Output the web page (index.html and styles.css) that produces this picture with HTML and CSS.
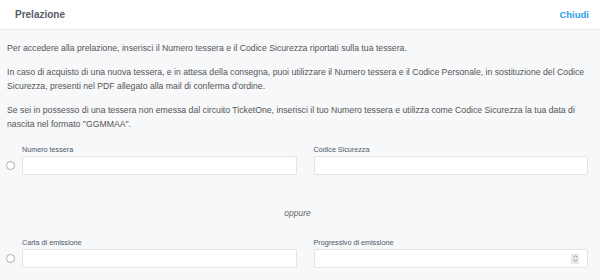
FILE: index.html
```html
<!DOCTYPE html>
<html>
<head>
  <title>Prelazione</title>
  <link rel="stylesheet" href="styles.css">
</head>
<body>
  <div class="modal-header">
    <h1 class="title">Prelazione</h1>
    <a class="close" href="#">Chiudi</a>
  </div>
  <div class="modal-body">
    <p class="generic-text">Per accedere alla prelazione, inserisci il Numero tessera e il Codice Sicurezza riportati sulla tua tessera.</p>
    <p class="generic-text">In caso di acquisto di una nuova tessera, e in attesa della consegna, puoi utilizzare il Numero tessera e il Codice Personale, in sostituzione del Codice Sicurezza, presenti nel PDF allegato alla mail di conferma d'ordine.</p>
    <p class="generic-text">Se sei in possesso di una tessera non emessa dal circuito TicketOne, inserisci il tuo Numero tessera e utilizza come Codice Sicurezza la tua data di nascita nel formato "GGMMAA".</p>

    <div class="field-row">
      <span class="radio"></span>
      <div class="fields">
        <div class="field">
          <label class="label">Numero tessera</label>
          <div class="input"></div>
        </div>
        <div class="field">
          <label class="label">Codice Sicurezza</label>
          <div class="input"></div>
        </div>
      </div>
    </div>

    <p class="oppure">oppure</p>

    <div class="field-row">
      <span class="radio"></span>
      <div class="fields">
        <div class="field">
          <label class="label">Carta di emissione</label>
          <div class="input"></div>
        </div>
        <div class="field">
          <label class="label">Progressivo di emissione</label>
          <div class="input number">
            <span class="spinner">
              <svg width="7" height="9" viewBox="0 0 7 9"><path d="M1.5 3.5 L3.5 1.5 L5.5 3.5 M1.5 5.5 L3.5 7.5 L5.5 5.5" fill="none" stroke="#8a8f96" stroke-width="0.9"/></svg>
            </span>
          </div>
        </div>
      </div>
    </div>
  </div>
</body>
</html>
```

FILE: styles.css
```css
body{
  margin: 0;
  background-color: #f7f8fa;
  font-family: "Liberation Sans", Arial, sans-serif;
  color: #555;
}

.modal-header{
  height: 29px;
  background-color: white;
  border-bottom: 1px solid #e6e9ee;
  display: flex;
  align-items: center;
  justify-content: space-between;
  padding: 0 11px 0 15px;
}

.title{
  margin: 0;
  font-size: 10px;
  font-weight: 700;
  color: #555c66;
}

.close{
  font-size: 9.5px;
  font-weight: 700;
  color: #2e9fe8;
  text-decoration: none;
}

.modal-body{
  padding: 11px 12px 0 7px;
}

.generic-text{
  margin: 0 0 10px;
  font-size: 8.7px;
  line-height: 14px;
  color: #555;
}

.field-row{
  display: flex;
  align-items: flex-end;
  margin-top: 14px;
}

.radio{
  flex: none;
  width: 7px;
  height: 7px;
  border: 1px solid #a9adb3;
  border-radius: 50%;
  background-color: white;
  margin: 0 7px 5px -1px;
}

.fields{
  flex: 1;
  display: grid;
  grid-template-columns: 1fr 1fr;
  column-gap: 17px;
}

.field{
  display: flex;
  flex-direction: column;
}

.label{
  font-size: 7.2px;
  line-height: 10px;
  color: #52606f;
  margin-bottom: 1px;
  -webkit-text-stroke: 0.05px #52606f;
}

.input{
  height: 17px;
  background-color: white;
  border: 1px solid #e1e5ea;
  border-radius: 2px;
}

.number{
  display: flex;
  align-items: center;
  justify-content: flex-end;
  padding-right: 8px;
}

.spinner{
  width: 8px;
  height: 10px;
  background-color: #e8e9eb;
  display: flex;
  align-items: center;
  justify-content: center;
}

.oppure{
  margin: 32px 0 19px;
  text-align: center;
  font-style: italic;
  font-size: 8.5px;
  line-height: 12px;
  color: #666;
}
```
